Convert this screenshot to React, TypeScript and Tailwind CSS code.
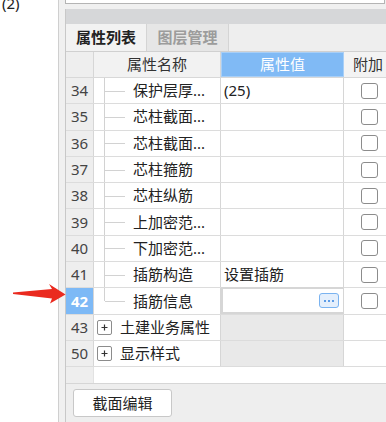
import React from "react";

type Row = {
  no: string;
  name: string;
  value?: string;
  kind: "leaf" | "group";
  selected?: boolean;
  last?: boolean;
};

const rows: Row[] = [
  { no: "34", name: "保护层厚...", value: "(25)", kind: "leaf" },
  { no: "35", name: "芯柱截面...", kind: "leaf" },
  { no: "36", name: "芯柱截面...", kind: "leaf" },
  { no: "37", name: "芯柱箍筋", kind: "leaf" },
  { no: "38", name: "芯柱纵筋", kind: "leaf" },
  { no: "39", name: "上加密范...", kind: "leaf" },
  { no: "40", name: "下加密范...", kind: "leaf" },
  { no: "41", name: "插筋构造", value: "设置插筋", kind: "leaf" },
  { no: "42", name: "插筋信息", kind: "leaf", selected: true, last: true },
  { no: "43", name: "土建业务属性", kind: "group" },
  { no: "50", name: "显示样式", kind: "group" },
];

function Checkbox() {
  return <div className="w-[17px] h-[16px] rounded-[3px] border border-[#8c8c8c] bg-white" />;
}

function PropRow({ row }: { row: Row }) {
  return (
    <div className="flex h-[26.3px] border-b border-[#dcdcdc]">
      {/* row number */}
      <div
        className={`w-[28px] shrink-0 flex items-center justify-center border-r border-[#d6d6d6] ${
          row.selected ? "bg-[#7db9f6] text-white font-bold" : "bg-[#eeeeee] text-[#444]"
        }`}
      >
        {row.no}
      </div>

      {/* name */}
      <div className="w-[127px] shrink-0 flex items-center border-r border-[#d6d6d6] bg-white relative">
        {row.kind === "leaf" ? (
          <>
            <div
              className={`absolute left-[10px] top-0 w-px bg-[#d2d2d2] ${row.last ? "h-1/2" : "h-full"}`}
            />
            <div className="absolute left-[11px] top-1/2 w-[20px] h-px bg-[#d2d2d2]" />
            <span className="pl-[39px] whitespace-nowrap text-[#222]">{row.name}</span>
          </>
        ) : (
          <>
            <div className="ml-[3px] w-[15px] h-[15px] border border-[#8c8c8c] rounded-[2px] flex items-center justify-center">
              <svg width="9" height="9" viewBox="0 0 9 9">
                <path d="M4.5 1.5v6M1.5 4.5h6" stroke="#333" strokeWidth="1.2" />
              </svg>
            </div>
            <span className="pl-[8px] whitespace-nowrap text-[#222]">{row.name}</span>
          </>
        )}
      </div>

      {/* value */}
      <div
        className={`w-[123px] shrink-0 flex items-center border-r border-[#d6d6d6] ${
          row.kind === "group" ? "bg-[#e9e9e9]" : "bg-white"
        } ${row.selected ? "border-2 border-[#78b2f0] -mt-px justify-end pr-[4px]" : "pl-[3px]"}`}
      >
        {row.selected ? (
          <div className="w-[20px] h-[15px] rounded-[3px] border border-[#7ab3f0] bg-[#e4effc] flex items-center justify-center gap-[2px]">
            <span className="w-[2px] h-[2px] bg-[#5d9ce6]" />
            <span className="w-[2px] h-[2px] bg-[#5d9ce6]" />
            <span className="w-[2px] h-[2px] bg-[#5d9ce6]" />
          </div>
        ) : (
          <span className="whitespace-nowrap text-[#222]">{row.value}</span>
        )}
      </div>

      {/* attach */}
      <div className="flex-1 flex items-center pl-[17px] bg-white">
        {row.kind === "leaf" && <Checkbox />}
      </div>
    </div>
  );
}

export default function App() {
  return (
    <div
      className="w-[386px] h-[422px] overflow-hidden relative flex text-[15px] leading-none"
      style={{ fontFamily: '"Noto Sans", "Noto Sans CJK SC", sans-serif' }}
    >
      {/* left pane */}
      <div className="w-[59px] shrink-0 bg-white border-r border-[#cfcfcf]">
        <div className="pl-[2px] -mt-[4px] text-[#222]">(2)</div>
      </div>

      {/* right pane */}
      <div className="flex-1 bg-[#f0f0f0] pl-[6px] flex flex-col">
        <div className="h-[4px] mr-[1px] bg-white border-l border-r border-b border-[#b4b4b4]" />

        <div className="mt-[5px] flex-1 flex flex-col border-l border-[#c8c8c8]">
          {/* title bar */}
          <div className="h-[15px] bg-[#d6d7d9]" />

          {/* tabs */}
          <div className="h-[28px] flex bg-[#eeeeee] border-b border-[#d0d0d0]">
            <div className="w-[81px] flex items-center justify-center font-bold text-[#222] bg-[#f2f2f2] border-r border-[#d4d4d4]">
              属性列表
            </div>
            <div className="w-[82px] flex items-center justify-center font-bold text-[#9c9c9c] bg-[#e6e6e6] border-r border-[#d4d4d4]">
              图层管理
            </div>
          </div>

          {/* header */}
          <div className="flex h-[26px] border-b border-[#d8d8d8]">
            <div className="w-[28px] shrink-0 bg-[#eeeeee] border-r border-[#d6d6d6]" />
            <div className="w-[127px] shrink-0 flex items-center justify-center bg-[#f2f2f2] text-[#333] border-r border-[#d6d6d6]">
              属性名称
            </div>
            <div className="w-[123px] shrink-0 flex items-center justify-center bg-[#80baf5] text-white border border-[#a8cff7]">
              属性值
            </div>
            <div className="flex-1 flex items-center pl-[9px] bg-[#f3f3f3] text-[#333] whitespace-nowrap">
              附加
            </div>
          </div>

          {rows.map((r) => (
            <PropRow key={r.no} row={r} />
          ))}

          {/* empty filler row */}
          <div className="flex h-[17px] border-b border-[#d6d6d6]">
            <div className="w-[28px] shrink-0 bg-[#eeeeee] border-r border-[#e2e2e2]" />
            <div className="flex-1 bg-white" />
          </div>

          {/* bottom bar */}
          <div className="flex-1 bg-[#eeeeee] pl-[7px] pt-[5px]">
            <button className="w-[99px] h-[28px] bg-white border border-[#c8c8c8] rounded-[3px] text-[#222] flex items-center justify-center">
              截面编辑
            </button>
          </div>
        </div>
      </div>

      {/* red pointer arrow */}
      <svg className="absolute left-0 top-[280px]" width="70" height="30" viewBox="0 0 70 30">
        <polygon
          points="13,12.5 52,9 49,4 65.5,14.5 50,23.5 52,18.5 13,14"
          fill="#ea2a1f"
        />
      </svg>
    </div>
  );
}
